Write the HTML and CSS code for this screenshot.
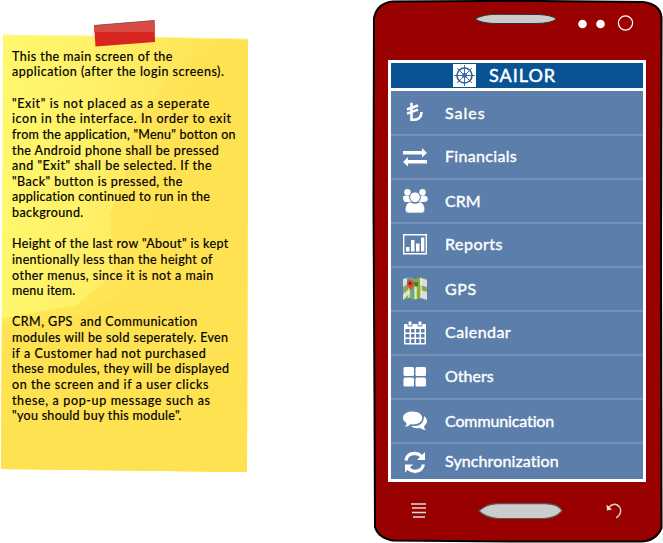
FILE: index.html
```
<!DOCTYPE html>
<html lang="en">
<head>
<meta charset="utf-8">
<title>Sailor main screen</title>
<link rel="stylesheet" href="styles.css">
</head>
<body>
<main class="board">
<section class="note">
<svg class="note-paper" width="250" height="480" viewBox="0 0 250 480">
<defs><linearGradient id="paper" x1="0" y1="0" x2="1" y2=".12"><stop offset="0" stop-color="#fff86c"/><stop offset=".35" stop-color="#fff169"/><stop offset=".72" stop-color="#ffe65b"/><stop offset="1" stop-color="#ffe04e"/></linearGradient></defs>
<path d="M3 35 L95 36 L248 39 L247 472 L1 469 L2 250Z" fill="url(#paper)"/>
<path d="M2 318 L75 306 L95 290 L115 273 L110 215 L124 180 L134 120 L190 60 L222 44 L248 39 L247 472 L1 469Z" fill="#ffe251" opacity=".75"/>
<path d="M2 325 L75 315 L110 300 L140 270 L155 200 L175 120 L225 60 L248 39 L247 472 L1 469Z" fill="#ffe251"/>
<path d="M3 35 L95 36 L248 39" fill="none" stroke="#fff99b"/>
<path d="M94 25.5 L154.500 20.500 L155 42 L95.500 46.500Z" fill="#d6261f"/>
<path d="M94 25.500 L154.500 20.500 L155 32 L94 32Z" fill="#d94c46"/>
<path d="M94 25.500 L154.500 20.500" stroke="#8c5552"/>
</svg>
<div class="note-text">
<p><span class="l1">This the main screen of the</span><span class="l2">application (after the login screens).</span></p>
<p><span class="l3">"Exit" is not placed as a seperate</span><span class="l4">icon in the interface. In order to exit</span><span class="l5">from the application, "Menu" botton on</span><span class="l6">the Android phone shall be pressed</span><span class="l7">and "Exit" shall be selected. If the</span><span class="l8">"Back" button is pressed, the</span><span class="l9">application continued to run in the</span><span class="l10">background.</span></p>
<p><span class="l11">Height of the last row "About" is kept</span><span class="l12">inentionally less than the height of</span><span class="l13">other menus, since it is not a main</span><span class="l14">menu item.</span></p>
<p><span class="l15">CRM, GPS&nbsp; and Communication</span><span class="l16">modules will be sold seperately. Even</span><span class="l17">if a Customer had not purchased</span><span class="l18">these modules, they will be displayed</span><span class="l19">on the screen and if a user clicks</span><span class="l20">these, a pop-up message such as</span><span class="l21">"you should buy this module".</span></p>
</div>
</section>
<section class="phone">
<svg class="shell" width="291" height="543" viewBox="372 0 291 543">
<path d="M374 18 Q377 3 393 1.500 L520 .8 L643 2 Q660 4 661.500 17 L661 260 L661.500 528 Q656 541 641 541.500 L510 541.500 L393 540.500 Q378 538 375 527 L374.500 400 L373.500 200Z" fill="#900" stroke="#000" stroke-width="2"/>
<path d="M475 19 Q483 14 499 14.300 L538 14.500 Q552 15 556.500 19 Q551 23.500 535 23.500 H494 Q481 23 475 19Z" fill="#ccc" stroke="#333"/>
<circle cx="582.500" cy="24" r="4.300" fill="#fff"/><circle cx="600.500" cy="24" r="4.300" fill="#fff"/>
<circle cx="625.500" cy="23" r="7.100" fill="none" stroke="#fff" stroke-width="1.200"/>
<path d="M479 511 Q486 504 498 503.700 H545 Q559 504 562 511 Q556 518 544 518.500 H498 Q485 517.500 479 511Z" fill="#ccc" stroke="#555" stroke-width="1.200"/>
<path d="M411 504h15M412 508h14M412 512.500h14M413 517h12" stroke="#ddd" stroke-width="1.300"/>
<path d="M608 508 Q615 501 619.500 507 Q623 513 616 518" fill="none" stroke="#ddd" stroke-width="1.300"/><path d="M606.500 504.500 L607 510.500 L612 509.500Z" fill="#ddd"/>
</svg>
<div class="screen">
<header class="bar">
<svg class="wheel" width="23" height="23" viewBox="0 0 23 23"><rect width="23" height="23" fill="#fff"/><g fill="none" stroke="#2c609d"><circle cx="11.500" cy="11.500" r="7.500" stroke-width="1.600"/><circle cx="11.500" cy="11.500" r="2"/><path stroke-width=".9" d="M11.500 1v21M1 11.500h21M4 4l15 15M19 4L4 19"/></g></svg>
<h1>SAILOR</h1>
</header>
<ul class="menu">
<li><svg class="icon" viewBox="0 0 24 24"><path d="M8.500 1.800V18.800Q18.500 19.500 18.500 11M4 8.500l11-4M4 12.700l11-4" fill="none" stroke="#fff" stroke-width="2.500"/></svg><span class="t1">Sales</span></li>
<li><svg class="icon" viewBox="0 0 24 24"><path d="M0 6h19V3l5 5-5 4.500V9.500H0zM24 15H5v-3L0 17l5 4.500V18.500h19z"/></svg><span class="t2">Financials</span></li>
<li><svg class="icon" viewBox="0 0 24 24"><circle cx="4.500" cy="3.200" r="3.200"/><circle cx="19.500" cy="3.200" r="3.200"/><path d="M0 7.500q2-1.500 6-.7 0 4 3 6.200H2q-2-1-2-5.500zM24 7.500q-2-1.500-6-.7 0 4-3 6.200h7q4-1 2-5.500z"/><circle cx="12" cy="8.200" r="5.300" stroke="#5b7eaa" stroke-width=".8"/><path d="M7 13q5 3 10 0 4 .5 4.800 7 .2 4-3.300 4h-13q-3.500 0-3.300-4Q3 13.500 7 13z" stroke="#5b7eaa" stroke-width=".6"/></svg><span class="t3">CRM</span></li>
<li><svg class="icon" viewBox="0 0 24 24"><path d="M.7 1.700h22.600v19H.7z" fill="none" stroke="#fff" stroke-width="1.400"/><path d="M3 14h3.500v4.500H3zM8 7h3.500v11.500H8zM13 10.500h3.500v8H13zM18 4.500h3.300v14H18z"/></svg><span class="t4">Reports</span></li>
<li><svg class="icon map" viewBox="0 0 24 24"><path fill="#80ad4d" d="M0 2l6-2 6 2 6-2 6 2v21l-6-2-6 2-6-2-6 2z"/><path fill="#ddd" d="M0 2l4-1 2 5-6 4zM17 1l7 2v7l-7-2zM18 13l6 2v8l-6-2zM0 17l5-4 2 3-7 7z"/><path fill="#42a0d4" d="M4 0h3v5l-3 2zM9 10l4 3v9h-3v-7z"/><path fill="#f3d553" d="M12 10h2v12h-2z"/><path d="M6 21V10M12 10v12M18 1v20" stroke="#edf1df" stroke-width="1.200"/><path d="M7.500 13Q3 8 4 5q2-4 6-1 3 3-2.500 9z" fill="#e84338"/><circle cx="7" cy="6.500" r="1.400" fill="#652323"/><path d="M11 5h4v4h-3z" fill="#477b28"/></svg><span class="t5">GPS</span></li>
<li><svg class="icon" viewBox="0 0 24 24"><path d="M2 3h20q1 0 1 1v18.500q0 1-1 1H2q-1 0-1-1V4q0-1 1-1z"/><path d="M2.500 8h4v3.500h-4zM8 8h3.500v3.500H8zM13 8h3.500v3.500H13zM18 8h3.500v3.500H18zM2.500 13h4v3.500h-4zM8 13h3.500v3.500H8zM13 13h3.500v3.500H13zM18 13h3.500v3.500H18zM2.500 18h4v4h-4zM8 18h3.500v4H8zM13 18h3.500v4H13zM18 18h3.500v4H18z" fill="#5b7eaa"/><path d="M5 0h4v5H5zM15 0h4v5h-4z" stroke="#5b7eaa"/></svg><span class="t6">Calendar</span></li>
<li><svg class="icon" viewBox="0 0 24 24"><rect x=".5" y="2" width="10.500" height="9" rx="1.500"/><rect x="12.500" y="2" width="10.500" height="9" rx="1.500"/><rect x=".5" y="12.500" width="10.500" height="9" rx="1.500"/><rect x="12.500" y="12.500" width="10.500" height="9" rx="1.500"/></svg><span class="t7">Others</span></li>
<li><svg class="icon" viewBox="0 0 24 24"><path d="M21 7q5 4 2 8-2 2-2 3 0 1 2 3-3 0-6-2-6 1-9-2 13 1 13-10z"/><path d="M9.500 2.500c13 0 13 13 0 13l-2-.2Q5 18 2 18q2-2 1.500-4C-3 10 0 2.500 9.500 2.500z"/></svg><span class="t8">Communication</span></li>
<li class="last"><svg class="icon" viewBox="0 0 24 24"><path d="M3 10.500Q4 3.500 11.500 3.300q4.500 0 7.500 3.700M20.500 14.500Q19 21 12 21.300q-4.500 0-7.500-3.700" fill="none" stroke="#fff" stroke-width="3.200"/><path d="M22 2v8h-8zM2 22.500v-8h8z"/></svg><span class="t9">Synchronization</span></li>
</ul>
</div>
</section>
</main>
</body>
</html>
```
FILE: styles.css
```
* { box-sizing: border-box; }
body { margin: 0; background: #fff; color: #000; font-family: Lato, "Liberation Sans", sans-serif; font-variant-ligatures: none; overflow: hidden; }
.board { display: flex; justify-content: space-between; width: 663px; height: 543px; }
.note { display: grid; width: 250px; height: 480px; }
.note-paper, .note-text { grid-area: 1 / 1; }
.note-text { padding: 48.800px 0 0 12px; font-size: 12.500px; line-height: 15.620px; -webkit-text-stroke: .2px #000; }
.note-text p { margin: 0 0 15.620px; }
.note-text span { display: block; width: max-content; white-space: nowrap; letter-spacing: .4px; }
.note-text .l1 { letter-spacing: .47px; }
.note-text .l2 { letter-spacing: .5px; }
.note-text .l3 { letter-spacing: .62px; }
.note-text .l4 { letter-spacing: .6px; }
.note-text .l5 { letter-spacing: .23px; }
.note-text .l6 { letter-spacing: .43px; }
.note-text .l7 { letter-spacing: .51px; }
.note-text .l8 { letter-spacing: .47px; }
.note-text .l9 { letter-spacing: .27px; }
.note-text .l11, .note-text .l12 { letter-spacing: .35px; }
.note-text .l13 { letter-spacing: .46px; }
.note-text .l14 { letter-spacing: .2px; }
.note-text .l15 { letter-spacing: .45px; }
.note-text .l16 { letter-spacing: .37px; }
.note-text .l17 { letter-spacing: .53px; }
.note-text .l19 { letter-spacing: .59px; }
.note-text .l20 { letter-spacing: .64px; }
.note-text .l21 { letter-spacing: .3px; }
.phone { display: grid; width: 291px; height: 543px; }
.shell, .screen { grid-area: 1 / 1; }
.screen { width: 258px; height: 422px; margin: 60px 0 0 16px; border: 3px solid #fff; background: #5b7eaa; }
.bar { display: flex; align-items: center; height: 28px; padding-left: 62px; gap: 13px; border-bottom: 3px solid #fff; background: #085394; color: #fff; }
.bar h1 { margin: 0; font-size: 18px; line-height: 25px; font-weight: 400; letter-spacing: 1px; -webkit-text-stroke: .5px #fff; }
.menu { margin: 0; padding: 0; list-style: none; }
.menu li { display: flex; align-items: center; gap: 18px; height: 44px; padding-left: 12px; border-bottom: 2px solid #7792b9; color: #fff; font-size: 16px; line-height: 20px; -webkit-text-stroke: .4px #fff; }
.menu li:first-child { height: 45px; }
.menu .last { height: 35px; border-bottom: 0; }
.t1 { letter-spacing: 1px; }
.t2 { letter-spacing: .33px; }
.t4 { letter-spacing: .5px; }
.t5 { letter-spacing: .6px; }
.t6 { letter-spacing: .45px; }
.t8 { letter-spacing: -.12px; }
.t9 { letter-spacing: .12px; }
.t2, .t4, .t6, .t7, .t9 { margin-top: -2px; }
.icon { width: 24px; height: 24px; fill: #fff; flex: none; -webkit-text-stroke: 0; overflow: visible; }
```
